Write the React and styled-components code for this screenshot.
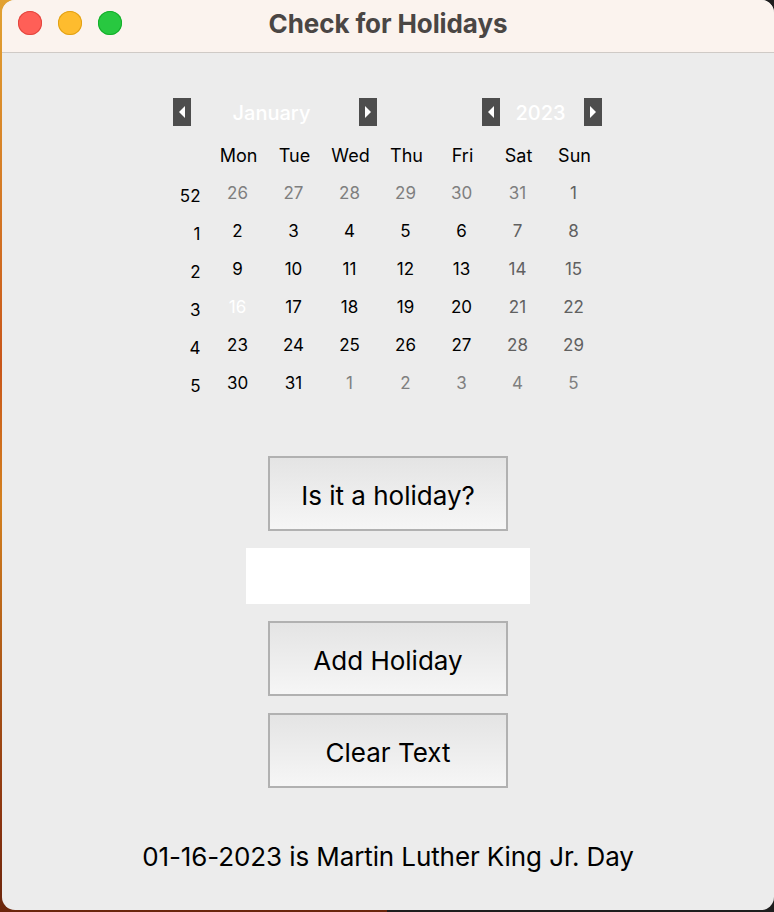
import React from 'react';
import styled, { createGlobalStyle } from 'styled-components';

const GlobalStyle = createGlobalStyle`
    html, body {
        margin: 0;
        padding: 0;
    }
    body {
        width: 774px;
        height: 912px;
        overflow: hidden;
        background:
            linear-gradient(to right, transparent 50%, #1e1e1e 50%),
            linear-gradient(to bottom, #e2a232 0%, #c8561a 40%, #d3801f 55%, #8a3410 90%, #6a260c 100%);
        font-family: Inter, "Liberation Sans", Arial, sans-serif;
    }
`;

const Window = styled.div`
    margin-left: 2px;
    width: 772px;
    height: 910px;
    border-radius: 13px;
    overflow: hidden;
    background: #ececec;
    display: flex;
    flex-direction: column;
`;

const TitleBar = styled.div`
    height: 52px;
    flex: none;
    background: #fbf3ee;
    border-bottom: 1px solid #cfcac6;
    display: flex;
    align-items: center;
    justify-content: center;
    position: relative;
`;

const Lights = styled.div`
    position: absolute;
    left: 16px;
    top: 11px;
    display: flex;
    gap: 16px;
`;

const Light = styled.span`
    width: 24px;
    height: 24px;
    border-radius: 50%;
    background: ${p => p.color};
    box-shadow: inset 0 0 0 1px ${p => p.edge};
`;

const Title = styled.div`
    font-size: 26px;
    font-weight: 700;
    color: #4a4644;
    margin-top: -6px;
    letter-spacing: -0.1px;
`;

const Body = styled.div`
    flex: 1;
    display: flex;
    flex-direction: column;
    align-items: center;
    padding-top: 45px;
`;

const Calendar = styled.div`
    width: 432px;
    margin-right: 5px;
`;

const NavRow = styled.div`
    display: flex;
    align-items: center;
    height: 28px;
    padding-left: 3px;
    margin-bottom: 10px;
`;

const NavGroup = styled.div`
    display: flex;
    align-items: center;
`;

const ArrowBtn = styled.div`
    width: 18px;
    height: 28px;
    background: #4d4d4d;
    display: flex;
    align-items: center;
    justify-content: center;
`;

const NavLabel = styled.div`
    box-sizing: border-box;
    width: ${p => p.w}px;
    text-align: center;
    color: #ffffff;
    font-size: 20px;
    font-weight: 500;
    padding-right: ${p => p.shift}px;
    padding-top: 2px;
`;

const Spacer = styled.div`
    width: 106px;
`;

const Grid = styled.div`
    display: grid;
    grid-template-columns: 40px repeat(7, 56px);
    grid-auto-rows: 38px;
`;

const HeadCell = styled.div`
    display: flex;
    align-items: center;
    justify-content: center;
    font-size: 18px;
    color: #000;
    padding-left: 2px;
`;

const WeekCell = styled.div`
    display: flex;
    align-items: center;
    justify-content: flex-end;
    padding-right: 9px;
    padding-top: 5px;
    font-size: 17px;
    color: #000;
`;

const DayCell = styled.div`
    display: flex;
    align-items: center;
    justify-content: center;
    font-size: 17px;
    color: ${p => (p.selected ? '#ffffff' : p.other ? '#7f7f7f' : p.weekend ? '#606060' : '#000000')};
`;

const Button = styled.div`
    box-sizing: border-box;
    width: 240px;
    height: 75px;
    padding-top: 4px;
    border: 2px solid #b1b1b1;
    background: linear-gradient(to bottom, #e4e4e4, #f6f6f6);
    display: flex;
    align-items: center;
    justify-content: center;
    font-size: 26px;
    color: #000;
    margin-top: ${p => p.top}px;
`;

const Entry = styled.div`
    width: 284px;
    height: 56px;
    background: #ffffff;
    margin-top: 17px;
`;

const Status = styled.div`
    margin-top: 53px;
    font-size: 26px;
    color: #000;
    letter-spacing: -0.1px;
`;

const Arrow = ({ dir }) => (
    <svg width="8" height="12" viewBox="0 0 8 12">
        {dir === 'left'
            ? <polygon points="7,0 7,12 1,6" fill="#fff" />
            : <polygon points="1,0 1,12 7,6" fill="#fff" />}
    </svg>
);

const weeks = [
    { n: 52, days: [[26, 1], [27, 1], [28, 1], [29, 1], [30, 1], [31, 1], [1, 0]] },
    { n: 1, days: [[2], [3], [4], [5], [6], [7], [8]] },
    { n: 2, days: [[9], [10], [11], [12], [13], [14], [15]] },
    { n: 3, days: [[16], [17], [18], [19], [20], [21], [22]] },
    { n: 4, days: [[23], [24], [25], [26], [27], [28], [29]] },
    { n: 5, days: [[30], [31], [1, 1], [2, 1], [3, 1], [4, 1], [5, 1]] },
];

const dayNames = ['Mon', 'Tue', 'Wed', 'Thu', 'Fri', 'Sat', 'Sun'];

export default function App() {
    return (
        <>
            <GlobalStyle />
            <Window>
                <TitleBar>
                    <Lights>
                        <Light color="#ff5f57" edge="#e2463f" />
                        <Light color="#febc2e" edge="#e1a116" />
                        <Light color="#28c840" edge="#14ae2a" />
                    </Lights>
                    <Title>Check for Holidays</Title>
                </TitleBar>
                <Body>
                    <Calendar>
                        <NavRow>
                            <NavGroup>
                                <ArrowBtn><Arrow dir="left" /></ArrowBtn>
                                <NavLabel w={168} shift={6}>January</NavLabel>
                                <ArrowBtn><Arrow dir="right" /></ArrowBtn>
                            </NavGroup>
                            <Spacer />
                            <NavGroup>
                                <ArrowBtn><Arrow dir="left" /></ArrowBtn>
                                <NavLabel w={84} shift={2}>2023</NavLabel>
                                <ArrowBtn><Arrow dir="right" /></ArrowBtn>
                            </NavGroup>
                        </NavRow>
                        <Grid>
                            <div />
                            {dayNames.map(d => <HeadCell key={d}>{d}</HeadCell>)}
                            {weeks.map(w => (
                                <React.Fragment key={w.n}>
                                    <WeekCell>{w.n}</WeekCell>
                                    {w.days.map(([d, other], i) => {
                                        const isOther = other === 1;
                                        return (
                                            <DayCell
                                                key={i}
                                                other={isOther}
                                                weekend={i >= 5}
                                                selected={!isOther && d === 16}
                                            >
                                                {d}
                                            </DayCell>
                                        );
                                    })}
                                </React.Fragment>
                            ))}
                        </Grid>
                    </Calendar>
                    <Button top={54}>Is it a holiday?</Button>
                    <Entry />
                    <Button top={17}>Add Holiday</Button>
                    <Button top={17}>Clear Text</Button>
                    <Status>01-16-2023 is Martin Luther King Jr. Day</Status>
                </Body>
            </Window>
        </>
    );
}
